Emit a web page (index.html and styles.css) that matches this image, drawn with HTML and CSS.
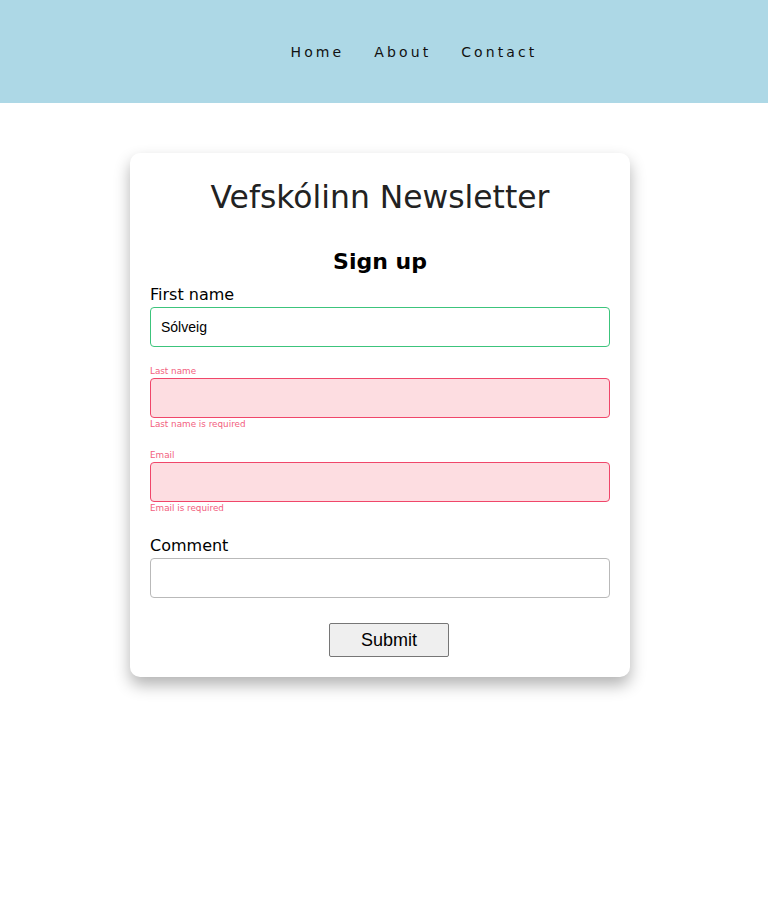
FILE: index.html
```html
<!DOCTYPE html>
<html lang="is">
<head>
<meta charset="utf-8">
<title>Vefskólinn Newsletter</title>
<link rel="stylesheet" href="styles.css">
</head>
<body>
<header class="site-header">
  <nav class="nav">
    <a class="nav-link" href="#">Home</a>
    <a class="nav-link" href="#">About</a>
    <a class="nav-link" href="#">Contact</a>
  </nav>
</header>
<main class="main">
  <section class="card">
    <h1 class="card-title">Vefskólinn Newsletter</h1>
    <form class="form">
      <h2 class="form-title">Sign up</h2>
      <div class="field">
        <label class="label">First name</label>
        <input class="input input-valid" type="text" value="Sólveig">
      </div>
      <div class="field">
        <label class="label label-error">Last name</label>
        <input class="input input-error" type="text">
        <div class="error">Last name is required</div>
      </div>
      <div class="field">
        <label class="label label-error">Email</label>
        <input class="input input-error" type="text">
        <div class="error">Email is required</div>
      </div>
      <div class="field field-last">
        <label class="label">Comment</label>
        <input class="input" type="text">
      </div>
      <div class="actions">
        <button class="submit" type="button">Submit</button>
      </div>
    </form>
  </section>
</main>
</body>
</html>
```
FILE: styles.css
```css
* { box-sizing: border-box; }
html, body { margin: 0; padding: 0; }
body {
  font-family: "DejaVu Sans", "Open Sans", sans-serif;
  background: #ffffff;
  color: #000;
}
.site-header {
  background: #add8e6;
  height: 103px;
  display: flex;
  align-items: center;
  justify-content: center;
  padding-left: 60px;
}
.nav {
  display: flex;
  gap: 30px;
}
.nav-link {
  color: #111;
  text-decoration: none;
  font-size: 14px;
  letter-spacing: 3.1px;
  line-height: 20px;
}
.main {
  padding: 50px 8px 40px 0;
}
.card {
  width: 500px;
  margin: 0 auto;
  background: #fff;
  border-radius: 10px;
  box-shadow: 0 8px 16px rgba(0, 0, 0, 0.3);
  padding: 20px 20px 20px;
}
.card-title {
  margin: 0;
  text-align: center;
  font-weight: 400;
  font-size: 31.4px;
  line-height: 48px;
  color: #222;
}
.form-title {
  margin: 23px 0 2px;
  text-align: center;
  font-size: 22px;
  line-height: 36px;
  font-weight: 700;
  color: #000;
}
.field {
  display: flex;
  flex-direction: column;
  margin-bottom: 18px;
}
.field-last { margin-bottom: 25px; }
.label {
  font-size: 16px;
  line-height: 25px;
  color: #000;
}
.label-error {
  font-size: 8.8px;
  line-height: 13px;
  color: #f2607e;
}
.input {
  width: 100%;
  height: 40px;
  border: 1px solid #b9b9b9;
  border-radius: 4px;
  padding: 0 10px;
  font-family: "Liberation Sans", Arial, sans-serif;
  font-size: 14px;
  color: #000;
  background: #fff;
}
.input-valid { border-color: #3cc47c; }
.input-error {
  border-color: #f0466a;
  background: #fddde1;
}
.error {
  font-size: 8.8px;
  line-height: 13px;
  color: #f2607e;
}
.actions {
  display: flex;
  justify-content: center;
}
.submit {
  width: 120px;
  height: 34px;
  background: #efefef;
  border: 1px solid #767676;
  border-radius: 2px;
  font-family: "Liberation Sans", Arial, sans-serif;
  font-size: 18px;
  color: #000;
  margin-left: 18px;
}
```
